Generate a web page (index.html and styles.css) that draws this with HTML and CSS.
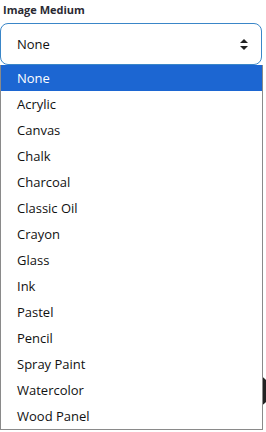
FILE: index.html
```html
<!DOCTYPE html>
<html lang="en">
<head>
  <meta charset="UTF-8">
  <meta name="viewport" content="width=device-width, initial-scale=1.0">
  <title>Image Medium</title>
  <link rel="stylesheet" href="styles.css">
</head>
<body>
  <div class="field">
    <label class="field-label">Image Medium</label>
    <div class="select-box">
      <span>None</span>
      <svg class="arrows" width="8" height="11" viewBox="0 0 8 11">
        <path d="M4 0 L8 4 L0 4 Z" fill="#222"/>
        <path d="M0 7 L8 7 L4 11 Z" fill="#222"/>
      </svg>
    </div>
    <ul class="options">
      <li class="selected">None</li>
      <li>Acrylic</li>
      <li>Canvas</li>
      <li>Chalk</li>
      <li>Charcoal</li>
      <li>Classic Oil</li>
      <li>Crayon</li>
      <li>Glass</li>
      <li>Ink</li>
      <li>Pastel</li>
      <li>Pencil</li>
      <li>Spray Paint</li>
      <li>Watercolor</li>
      <li>Wood Panel</li>
    </ul>
    <div class="behind"></div>
  </div>
</body>
</html>
```

FILE: styles.css
```css
body {
  font-family: "Open Sans", Arial, sans-serif;
  margin: 0;
  padding: 0;
  background-color: #fff;
  color: #111;
}
.field {
  position: relative;
  width: 266px;
  height: 432px;
  overflow: hidden;
}
.field-label {
  display: block;
  font-size: 11px;
  font-weight: 700;
  color: #2a2a33;
  padding: 2px 0 0 3px;
  height: 23px;
  box-sizing: border-box;
}
.select-box {
  display: flex;
  align-items: center;
  justify-content: space-between;
  width: 262px;
  height: 42px;
  box-sizing: border-box;
  border: 1px solid #3a86c8;
  border-radius: 8px;
  padding: 0 13px 0 16px;
  font-size: 13px;
  color: #111;
}
.options {
  position: relative;
  z-index: 2;
  list-style: none;
  margin: 0;
  padding: 0;
  width: 263px;
  box-sizing: border-box;
  border: 1px solid #8a8a8a;
  border-top: none;
  background: #fff;
}
.options li {
  height: 26px;
  line-height: 26px;
  padding-left: 16px;
  font-size: 13px;
  color: #111;
}
.options li.selected {
  background-color: #1c66d2;
  color: #fff;
}
.behind {
  position: absolute;
  left: 236px;
  top: 374px;
  width: 34px;
  height: 34px;
  border-radius: 50%;
  background: #222;
  z-index: 1;
}
```
